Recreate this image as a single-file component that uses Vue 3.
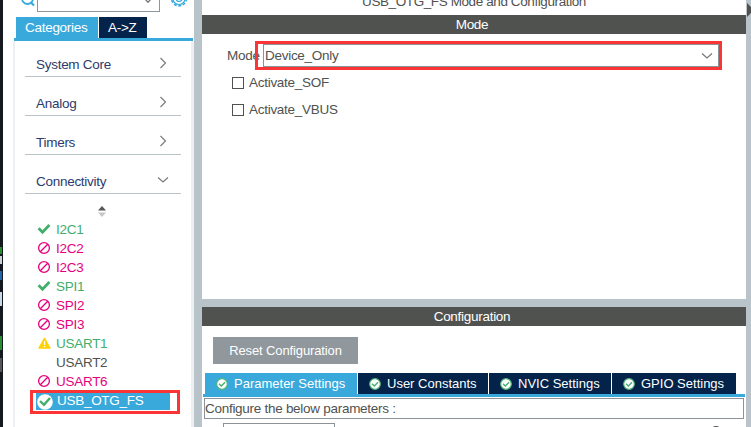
<script setup>
const groups = [
  { name: 'System Core', open: false },
  { name: 'Analog', open: false },
  { name: 'Timers', open: false },
  { name: 'Connectivity', open: true },
]
const items = [
  { name: 'I2C1', state: 'ok' },
  { name: 'I2C2', state: 'no' },
  { name: 'I2C3', state: 'no' },
  { name: 'SPI1', state: 'ok' },
  { name: 'SPI2', state: 'no' },
  { name: 'SPI3', state: 'no' },
  { name: 'USART1', state: 'warn' },
  { name: 'USART2', state: 'none' },
  { name: 'USART6', state: 'no' },
  { name: 'USB_OTG_FS', state: 'selected' },
]
const tabs = [
  { name: 'Parameter Settings', cls: 'param' },
  { name: 'User Constants', cls: 'user' },
  { name: 'NVIC Settings', cls: 'nvic' },
  { name: 'GPIO Settings', cls: 'gpio' },
]
</script>

<template>
  <div class="app">
    <div class="edge">
      <i class="fleck green"></i><i class="fleck white"></i><i class="fleck blue"></i><i class="fleck pale"></i><i class="fleck green low"></i><i class="fleck grey"></i>
    </div>
    <aside class="side">
      <div class="search">
        <svg class="mag" width="16" height="8" viewBox="0 0 16 8"><circle cx="7.5" cy="-1.5" r="5.5" fill="none" stroke="#39a9dc" stroke-width="1.8" /><path d="M10.5 2 L14 5.5" stroke="#39a9dc" stroke-width="2.2" /></svg>
        <div class="find">
          <svg width="10" height="4" viewBox="0 0 10 4"><path d="M2 -1 L5 2.3 L8 -1" fill="none" stroke="#777" stroke-width="1.3" /></svg>
        </div>
        <svg class="gear" width="18" height="8" viewBox="0 0 18 8"><circle cx="9" cy="-1.5" r="7.4" fill="none" stroke="#39a9dc" stroke-width="1.6" stroke-dasharray="2.9 1.75" /><circle cx="9" cy="-1.5" r="6" fill="none" stroke="#39a9dc" stroke-width="1.2" /><circle cx="9" cy="-1.5" r="3" fill="none" stroke="#39a9dc" stroke-width="1.3" /></svg>
      </div>
      <div class="cats"><div class="cat on">Categories</div><div class="cat az">A-&gt;Z</div></div>
      <div class="line"></div>
      <div class="tree">
        <div v-for="g in groups" :key="g.name" class="group">
          <span>{{ g.name }}</span>
          <svg width="12" height="12" viewBox="0 0 12 12">
            <path :d="g.open ? 'M1 3.5 L6 8 L11 3.5' : 'M3.5 1 L8.5 6 L3.5 11'" fill="none" stroke="#7b7b7b" stroke-width="1.2" />
          </svg>
        </div>
        <svg class="sort" width="8" height="11" viewBox="0 0 8 11"><path d="M4 0 L8 4.5 H0 Z" fill="#555" /><path d="M0 6.5 H8 L4 11 Z" fill="#c6c6c6" /></svg>
        <div class="list">
          <div v-for="i in items" :key="i.name" class="item" :class="i.state">
            <svg v-if="i.state === 'ok'" width="14" height="14" viewBox="0 0 14 14"><path d="M1.6 6.3 L5.5 10.2 L12.4 3" fill="none" stroke="#42ae6c" stroke-width="2.8" /></svg>
            <svg v-else-if="i.state === 'no'" width="14" height="14" viewBox="0 0 14 14"><circle cx="7" cy="7" r="5.4" fill="none" stroke="#e6007e" stroke-width="1.3" /><path d="M3.3 10.7 L10.7 3.3" stroke="#e6007e" stroke-width="1.3" /></svg>
            <svg v-else-if="i.state === 'warn'" width="14" height="14" viewBox="0 0 14 14"><path d="M7.5 1.8 L13.3 12.2 H1.7 Z" fill="#ffd200" stroke="#ffd200" stroke-width="1" stroke-linejoin="round" /><path d="M7.5 5 V9 M7.5 10 V11.3" stroke="#fff" stroke-width="1.2" /></svg>
            <svg v-else-if="i.state === 'selected'" width="16" height="16" viewBox="0 0 16 16"><circle cx="8" cy="8" r="7.8" fill="#fff" /><path d="M3 7 L7 10.8 L13 4" fill="none" stroke="#42ae6c" stroke-width="2.4" /></svg>
            <svg v-else width="14" height="14"></svg>
            <span>{{ i.name }}</span>
          </div>
        </div>
      </div>
      <div class="mark sidemark"></div>
    </aside>
    <div class="split"></div>
    <main class="main">
      <div class="title"><span>USB_OTG_FS Mode and Configuration</span></div>
      <div class="bar">Mode</div>
      <section class="mode">
        <div class="field"><label>Mode</label><div class="select"><span>Device_Only</span>
          <svg width="12" height="8" viewBox="0 0 12 8"><path d="M1 1.5 L6 6 L11 1.5" fill="none" stroke="#777" stroke-width="1.2" /></svg>
        </div></div>
        <div class="check"><i></i><span>Activate_SOF</span></div>
        <div class="check"><i></i><span>Activate_VBUS</span></div>
        <div class="mark modemark"></div>
      </section>
      <div class="gap"></div>
      <div class="bar">Configuration</div>
      <section class="config">
        <button class="reset">Reset Configuration</button>
        <div class="tabs">
          <div v-for="t in tabs" :key="t.name" class="tab" :class="t.cls">
            <svg width="12" height="12" viewBox="0 0 12 12"><circle cx="6" cy="6" r="5.3" fill="#fff" stroke="#55b67b" stroke-width="1.2" /><path d="M3 5.8 L5.3 8 L9 4.2" fill="none" stroke="#42ae6c" stroke-width="1.3" /></svg>
            <span>{{ t.name }}</span>
          </div>
        </div>
        <div class="line"></div>
        <div class="info">Configure the below parameters :</div>
        <div class="tools"><div class="filter"></div><div class="dot"></div></div>
      </section>
    </main>
    <div class="right"><svg width="5" height="14" viewBox="0 0 5 14"><path d="M1 0 L8 7 L1 14 Z" fill="#505050" /></svg></div>
  </div>
</template>

<style>
body { margin: 0; overflow: hidden; }
</style>

<style scoped>
* { box-sizing: border-box; }
.app { display: flex; width: 751px; height: 427px; overflow: hidden; background: #fff; font: 13.5px/18px "Liberation Sans", Arial, sans-serif; letter-spacing: -0.28px; color: #505250; white-space: nowrap; }
svg { display: block; flex: none; }
.edge { width: 3px; flex: none; background: #15181f; padding-top: 247px; }
.fleck { display: block; width: 2px; height: 7px; }
.green { background: #278c2e; }
.white { background: #ccd1d4; height: 8px; margin-top: 2px; }
.blue { background: #2366a8; height: 9px; margin-top: 7px; }
.pale { background: #c9d8e6; height: 14px; margin-top: 12px; }
.low { height: 14px; margin-top: 30px; }
.grey { background: #555; height: 14px; margin-top: 8px; }
.side { position: relative; width: 191px; flex: none; }
.search { display: flex; height: 17px; padding-left: 17px; }
.find { width: 123px; height: 12px; margin-left: 1px; border: 1px solid #8f969b; border-top: 0; display: flex; justify-content: flex-end; padding-right: 6px; }
.gear { margin-left: 10px; }
.cats { display: flex; gap: 1px; height: 21px; padding-left: 13px; color: #fff; line-height: 21px; }
.cat { background: #03234b; width: 48px; padding-left: 9px; }
.cat.on { background: #39a9dc; width: 82px; padding-left: 9px; }
.line { height: 3px; background: #39a9dc; }
.side .line { margin: 0 1px 0 11px; }
.tree { height: 386px; margin-left: 10px; border-left: 2px solid #eeeff1; border-right: 3px solid #eeeff1; padding-left: 10px; }
.group { width: 156px; height: 39px; border-bottom: 1px solid #b9c4ca; display: flex; align-items: center; justify-content: space-between; padding: 16px 12px 0 11px; color: #2c3b6c; }
.group:first-child { height: 36px; padding-top: 13px; }
.group svg { margin-top: -5px; }
.sort { margin: 12px 0 0 73px; }
.list { padding: 2px 0 0 11px; }
.item { width: 134px; height: 19px; display: flex; align-items: center; gap: 5px; padding-left: 1px; }
.item span { padding-top: 2px; }
.ok, .warn { color: #42ae6c; }
.no { color: #e6007e; }
.selected { height: 17px; margin-top: 3px; padding-left: 1px; gap: 4px; background: #39a9dc; color: #fff; }
.item.selected span { line-height: 15px; padding-top: 0; margin-top: -2px; }
.mark { position: absolute; border: 3px solid #fb3535; pointer-events: none; }
.sidemark { left: 27px; top: 390px; width: 150px; height: 24px; }
.split { width: 8px; flex: none; background: #b9c4ca; }
.main { width: 544px; flex: none; }
.title { display: flex; justify-content: center; align-items: flex-start; height: 15px; letter-spacing: -0.4px; }
.title span { margin-top: -7px; }
.bar { height: 19px; background: #505250; color: #fff; text-align: center; line-height: 19px; padding-right: 4px; }
.mode { position: relative; height: 265px; padding: 10px 0 0 25px; }
.field { display: flex; height: 23px; line-height: 23px; }
.field label { width: 36px; }
.select { width: 456px; height: 23px; border: 1px solid #8b9298; display: flex; align-items: center; justify-content: space-between; padding: 0 5px 0 1px; background: #fff; }
.check { display: flex; align-items: center; gap: 5px; height: 27px; padding-left: 5px; }
.field + .check { margin-top: 2px; }
.check i { width: 12px; height: 12px; border: 1px solid #505250; }
.modemark { left: 53px; top: 7px; width: 467px; height: 29px; }
.gap { height: 8px; background: #b9c4ca; }
.config { padding: 11px 1px 0; }
.reset { display: block; width: 145px; height: 27px; margin-left: 10px; padding: 0; border: 0; background: #90979d; color: #fff; font: inherit; font-size: 13px; letter-spacing: -0.12px; }
.tabs { display: flex; gap: 1px; height: 21px; margin: 9px 0 0 2px; color: #fff; font-size: 13px; letter-spacing: 0; }
.tab { display: flex; align-items: center; gap: 6px; padding-left: 11px; background: #03234b; }
.param { width: 152px; background: #39a9dc; }
.user { width: 130px; }
.nvic { width: 122px; }
.gpio { width: 124px; }
.info { width: 540px; height: 21px; margin: 1px 0 0 1px; border: 1px solid #8b9298; line-height: 19px; }
.tools { display: flex; padding: 4px 0 0 20px; }
.filter { width: 112px; height: 20px; border: 1px solid #8b9298; }
.dot { width: 12px; height: 12px; border-radius: 50%; border: 2px solid #555; margin: 3px 0 0 375px; }
.right { width: 5px; flex: none; background: #b9c4ca; padding-top: 3px; }
</style>
